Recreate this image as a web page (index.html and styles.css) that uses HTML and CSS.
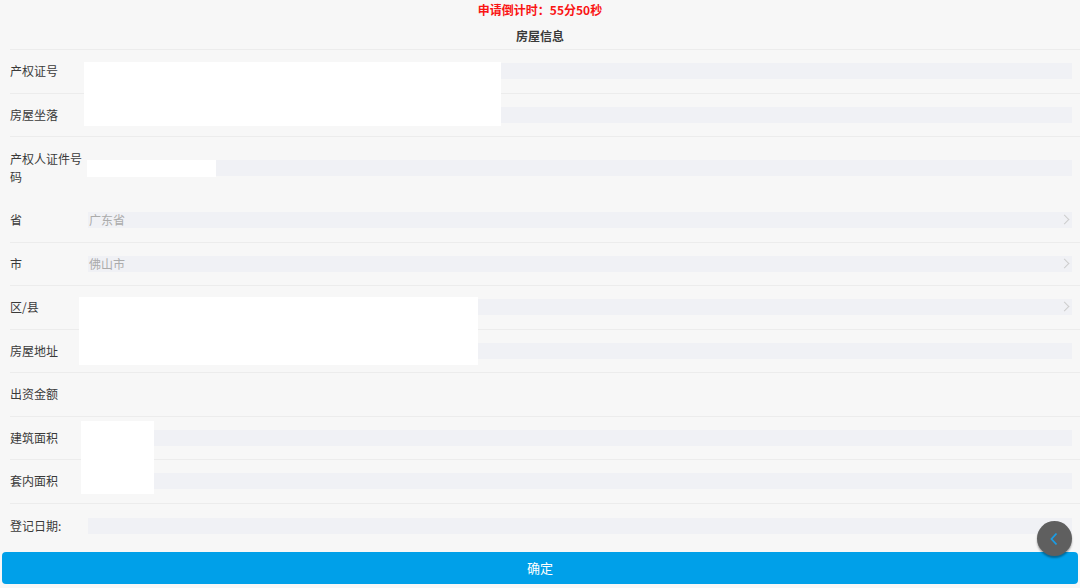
FILE: index.html
```html
<!DOCTYPE html>
<html lang="zh-CN">

<head>
    <meta charset="UTF-8" />
    <meta name="viewport" content="width=device-width, initial-scale=1.0" />
    <title>房屋信息</title>
    <link rel="stylesheet" href="styles.css">
</head>

<body>
    <header class="pageHead">
        <div class="countdown">申请倒计时：55分50秒</div>
        <h2 class="sectionTitle">房屋信息</h2>
    </header>

    <div class="formList">
        <div class="row">
            <label class="rowLabel">产权证号</label>
            <div class="field"></div>
        </div>
        <div class="row">
            <label class="rowLabel">房屋坐落</label>
            <div class="field"></div>
        </div>
        <div class="row row-tall">
            <label class="rowLabel">产权人证件号码</label>
            <div class="field"></div>
        </div>
        <div class="row">
            <label class="rowLabel">省</label>
            <div class="field field-select"><span class="placeholder">广东省</span><i class="arrow"></i></div>
        </div>
        <div class="row">
            <label class="rowLabel">市</label>
            <div class="field field-select"><span class="placeholder">佛山市</span><i class="arrow"></i></div>
        </div>
        <div class="row">
            <label class="rowLabel">区/县</label>
            <div class="field field-select"><i class="arrow"></i></div>
        </div>
        <div class="row">
            <label class="rowLabel">房屋地址</label>
            <div class="field"></div>
        </div>
        <div class="row">
            <label class="rowLabel">出资金额</label>
        </div>
        <div class="row">
            <label class="rowLabel">建筑面积</label>
            <div class="field"></div>
        </div>
        <div class="row">
            <label class="rowLabel">套内面积</label>
            <div class="field"></div>
        </div>
        <div class="row row-last">
            <label class="rowLabel">登记日期:</label>
            <div class="field"></div>
        </div>

        <!-- filled values hidden -->
        <div class="mask maskCert"></div>
        <div class="mask maskId"></div>
        <div class="mask maskAddr"></div>
        <div class="mask maskArea"></div>
    </div>

    <button class="submitBtn">确定</button>

    <a class="backBtn" href="#">
        <svg width="10" height="14" viewBox="0 0 10 14">
            <path d="M7.5 1.5 L2.5 7 L7.5 12.5" fill="none" stroke="#1a9de6" stroke-width="1.8" />
        </svg>
    </a>
</body>

</html>
```

FILE: styles.css
```css
* {
    box-sizing: border-box;
}

body {
    margin: 0;
    background-color: #f7f7f7;
    font-family: "Noto Sans CJK SC", "Microsoft YaHei", sans-serif;
    font-size: 12px;
    color: #3a3a3a;
}

.pageHead {
    text-align: center;
    border-bottom: 1px solid #ececec;
    margin-left: 10px;
    padding-right: 10px;
}

.countdown {
    color: #fa1414;
    font-weight: bold;
    line-height: 20px;
}

.sectionTitle {
    margin: 0;
    padding: 6px 0 3px;
    font-size: 12px;
    line-height: 20px;
    color: #3a3a3a;
}

.formList {
    position: relative;
    margin-left: 10px;
}

.row {
    display: flex;
    align-items: center;
    min-height: 43.5px;
    border-bottom: 1px solid #ececec;
}

.row-tall {
    padding: 13px 0;
    border-bottom: 0;
}

.row-last {
    border-bottom: 0;
    min-height: 45px;
}

.rowLabel {
    width: 78px;
    flex-shrink: 0;
    line-height: 18px;
}

.field {
    flex: 1;
    position: relative;
    height: 16px;
    margin-right: 8px;
    background-color: #f0f1f5;
}

.placeholder {
    display: block;
    padding-left: 1px;
    line-height: 16px;
    color: #ababab;
}

.arrow {
    position: absolute;
    right: 4px;
    top: 4px;
    width: 7px;
    height: 7px;
    border-top: 1px solid #cdcdcd;
    border-right: 1px solid #cdcdcd;
    transform: rotate(45deg);
}

.mask {
    position: absolute;
    background-color: #fff;
}

.maskCert {
    left: 74px;
    top: 12px;
    width: 417px;
    height: 64px;
}

.maskId {
    left: 77px;
    top: 110px;
    width: 129px;
    height: 17px;
}

.maskAddr {
    left: 69px;
    top: 247px;
    width: 399px;
    height: 68px;
}

.maskArea {
    left: 71px;
    top: 371px;
    width: 73px;
    height: 73px;
}

.submitBtn {
    display: block;
    width: calc(100% - 4px);
    height: 32px;
    margin: 3px 2px 0;
    border: 0;
    border-radius: 4px;
    background-color: #00a0e9;
    color: #fff;
    font-family: inherit;
    font-size: 13px;
}

.backBtn {
    position: fixed;
    left: 1037px;
    top: 521px;
    width: 35px;
    height: 35px;
    border-radius: 50%;
    background-color: #5f5f5f;
    box-shadow: 0 2px 2px rgba(0, 0, 0, 0.35);
    display: flex;
    align-items: center;
    justify-content: center;
}

.backBtn svg {
    margin-left: -2px;
}
```
